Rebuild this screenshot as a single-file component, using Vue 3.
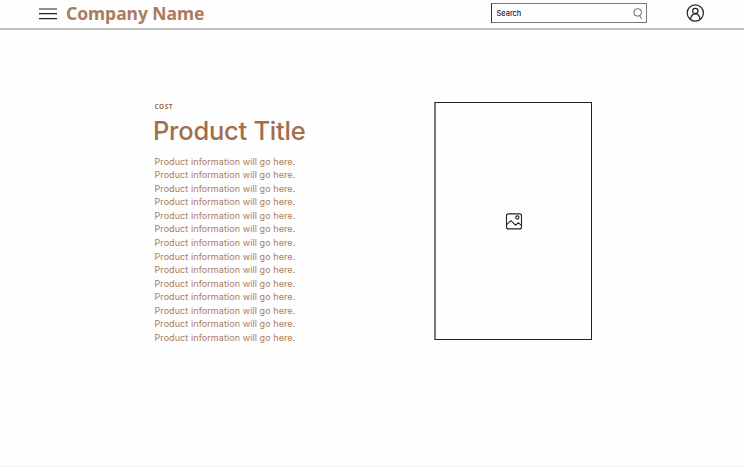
<script setup>
const lines = Array.from({ length: 14 }, () => 'Product information will go here.')
</script>

<template>
  <div class="page">
    <header class="header">
      <svg class="menu" width="18" height="12" viewBox="0 0 18 12">
        <path d="M0 1H18M0 5.7H18M0 10.7H18" />
      </svg>
      <span class="brand">Company Name</span>
      <div class="search">
        <span class="label">Search</span>
        <svg width="10" height="12" viewBox="0 0 10 12">
          <circle cx="4.7" cy="4.4" r="3.8" />
          <path d="M6.6 7.8L8.7 11" />
        </svg>
      </div>
      <svg class="user" width="18" height="18" viewBox="0 0 18 18">
        <circle cx="9.3" cy="9" r="8.1" />
        <circle cx="9.3" cy="7" r="2.7" />
        <path d="M4.6 15.2C5 11.5 6.7 9.8 9.3 9.8S13.6 11.5 14 15.2" />
      </svg>
    </header>
    <main class="main">
      <section class="info">
        <div class="cost">COST</div>
        <h1 class="title">Product Title</h1>
        <div class="copy">
          <p v-for="(line, i) in lines" :key="i">{{ line }}</p>
        </div>
      </section>
      <div class="picture">
        <svg width="18" height="18" viewBox="0 0 18 18">
          <rect x="1.5" y="1.9" width="15" height="15" rx="2" />
          <circle cx="12.4" cy="5.5" r="1.6" />
          <path d="M1.6 12.6L6 8.7L10.6 13.2L13.3 10.8L16.4 13.4" />
        </svg>
      </div>
    </main>
  </div>
</template>

<style>
body {
  background: #fefefe;
}
</style>

<style scoped>
.page {
  box-sizing: border-box;
  height: 467px;
  overflow: hidden;
  display: flex;
  flex-direction: column;
  border-bottom: 1px solid #f3f3f3;
  background: #fefefe;
}
svg {
  display: block;
  flex: none;
  fill: none;
  stroke: #222;
}
.header {
  box-sizing: border-box;
  height: 30px;
  flex: none;
  display: flex;
  align-items: flex-start;
  padding-left: 39px;
  border-bottom: 2px solid #bfbfbf;
}
.menu {
  margin-top: 8px;
  stroke-width: 1.2;
}
.brand {
  width: 425px;
  margin-left: 9px;
  font: 700 17.5px/27px "Noto Sans", sans-serif;
  letter-spacing: -0.04px;
  color: #aa7c5d;
  white-space: nowrap;
}
.search {
  box-sizing: border-box;
  width: 156px;
  height: 20px;
  margin-top: 3px;
  padding: 0 3px 0 4.5px;
  display: flex;
  align-items: center;
  justify-content: space-between;
  border: 1px solid #777;
  border-left-color: #333;
}
.search svg {
  margin-top: 1px;
  stroke: #555;
  stroke-width: 0.9;
}
.label {
  padding-top: 2px;
  font: 500 7.4px/18px "Inter", sans-serif;
  color: #222;
}
.user {
  margin: 4px 0 0 39px;
  stroke-width: 1.2;
}
.main {
  display: flex;
  padding: 72px 0 0 154px;
}
.info {
  width: 280px;
  color: #a16d4d;
}
.cost {
  padding-left: 0.5px;
  font: 700 6.5px/10px "Open Sans", sans-serif;
  letter-spacing: 0.45px;
}
.title {
  margin: -1px 0 1px -1px;
  font: 500 25.5px/40px "Inter", sans-serif;
  letter-spacing: -0.25px;
  white-space: nowrap;
}
.copy {
  padding: 2.6px 0 0 0.5px;
}
.copy p {
  margin: 0;
  font: 400 9px/13.56px "Inter", sans-serif;
  letter-spacing: 0.08px;
  color: #ac7c60;
  white-space: nowrap;
}
.picture {
  box-sizing: border-box;
  width: 158px;
  height: 238px;
  display: flex;
  align-items: center;
  justify-content: center;
  border: 1px solid #222;
  border-left: 2px solid #777;
}
.picture svg {
  stroke-width: 1.1;
}
</style>
